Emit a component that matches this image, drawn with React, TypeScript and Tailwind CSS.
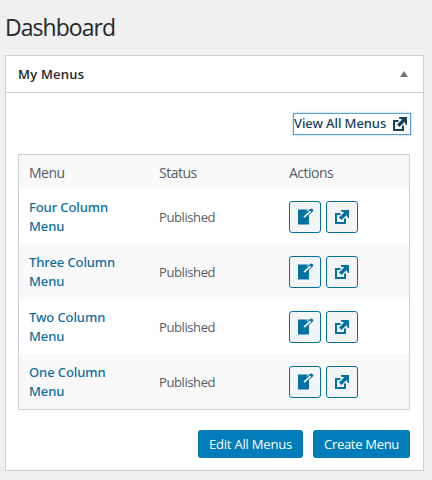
const menus = ['Four Column Menu', 'Three Column Menu', 'Two Column Menu', 'One Column Menu'];

function EditIcon() {
  return (
    <svg width="18" height="20" viewBox="0 0 18 20" className="block">
      <path fill="currentColor" d="M2 2.5h11v15H2z" />
      <path stroke="#f3f5f6" strokeWidth="5" d="M12.2 6.1l3.3-3.3" />
      <path stroke="currentColor" strokeWidth="3.8" strokeLinecap="round" d="M10.5 7.6l4.8-4.2" />
      <path stroke="#f3f5f6" strokeWidth="1.8" d="M8 10.2l6.6-6" />
    </svg>
  );
}

function ExternalIcon() {
  return (
    <svg width="14" height="14" viewBox="0 0 14 14" className="block">
      <path fill="none" stroke="currentColor" strokeWidth="2" d="M5.5 4H1v9h9V8.5" />
      <path fill="currentColor" d="M6 0h8v8h-1.2L11.7 5 6.4 10 4 7.6 9.2 2.4 6 1.5z" />
    </svg>
  );
}

export default function App() {
  return (
    <div className="h-[480px] w-[432px] overflow-hidden bg-[#f0f0f0] pl-[5px] pt-[12px] font-['Open_Sans','Noto_Sans',sans-serif] text-[#555d66]">
      <h1 className="h-[43px] text-[23px] leading-[30px] tracking-[-0.95px] text-[#23282d]">Dashboard</h1>
      <section className="h-[416px] w-[419px] border border-[#ccd0d4] bg-white">
        <header className="flex h-[37px] items-center justify-between border-b border-[#ccd0d4] pl-3 pr-[15px]">
          <h2 className="text-[13px] font-semibold leading-5 tracking-[0.2px] text-[#23282d]">My Menus</h2>
          <svg width="8" height="6" viewBox="0 0 8 6" className="block">
            <path fill="#72777c" d="M4 0l4 6H0z" />
          </svg>
        </header>
        <div className="flex flex-col items-end pl-3 pr-[13px] pt-5">
          <a className="-mr-px flex h-[22px] w-[118px] items-center justify-between border border-[#5b9dd9] pr-[3px] font-['Noto_Sans',sans-serif] text-[13px] font-medium text-[#16435c] shadow-[0_0_2px_rgba(30,140,190,0.5)]">
            <span className="whitespace-nowrap tracking-[-0.1px]">View All Menus</span>
            <ExternalIcon />
          </a>
          <div className="mt-[19px] w-[392px] border border-[#ccd0d4]">
            <div className="grid h-[34px] grid-cols-[130px_130px_1fr] items-center bg-[#f9f9f9] pl-[10px] text-[14px] tracking-[-0.5px]">
              <span>Menu</span>
              <span>Status</span>
              <span>Actions</span>
            </div>
            {menus.map((name, i) => (
              <div
                key={name}
                className={
                  'grid h-[55px] grid-cols-[130px_130px_1fr] items-center pl-[10px] ' +
                  (i % 2 ? 'bg-[#f9f9f9]' : 'bg-white')
                }
              >
                <a className="w-[100px] font-['Noto_Sans',sans-serif] text-[13px] font-medium leading-[19px] tracking-[-0.1px] text-[#0d6e9f]">
                  {name}
                </a>
                <span className="pt-[2px] text-[13px] tracking-[-0.4px]">Published</span>
                <div className="flex gap-[5px] text-[#0071a1]">
                  <button className="flex size-8 items-center justify-center rounded-[3px] border border-[#0071a1] bg-[#f3f5f6]">
                    <EditIcon />
                  </button>
                  <button className="flex size-8 items-center justify-center rounded-[3px] border border-[#0071a1] bg-[#f3f5f6]">
                    <ExternalIcon />
                  </button>
                </div>
              </div>
            ))}
          </div>
          <div className="mt-5 flex gap-[10px] text-[13px] text-white">
            <button className="h-7 w-[105px] whitespace-nowrap rounded-[3px] bg-[#007cba] pt-px tracking-[-0.2px]">Edit All Menus</button>
            <button className="h-7 w-[97px] whitespace-nowrap rounded-[3px] bg-[#007cba] pt-px tracking-[-0.3px]">Create Menu</button>
          </div>
        </div>
      </section>
    </div>
  );
}
